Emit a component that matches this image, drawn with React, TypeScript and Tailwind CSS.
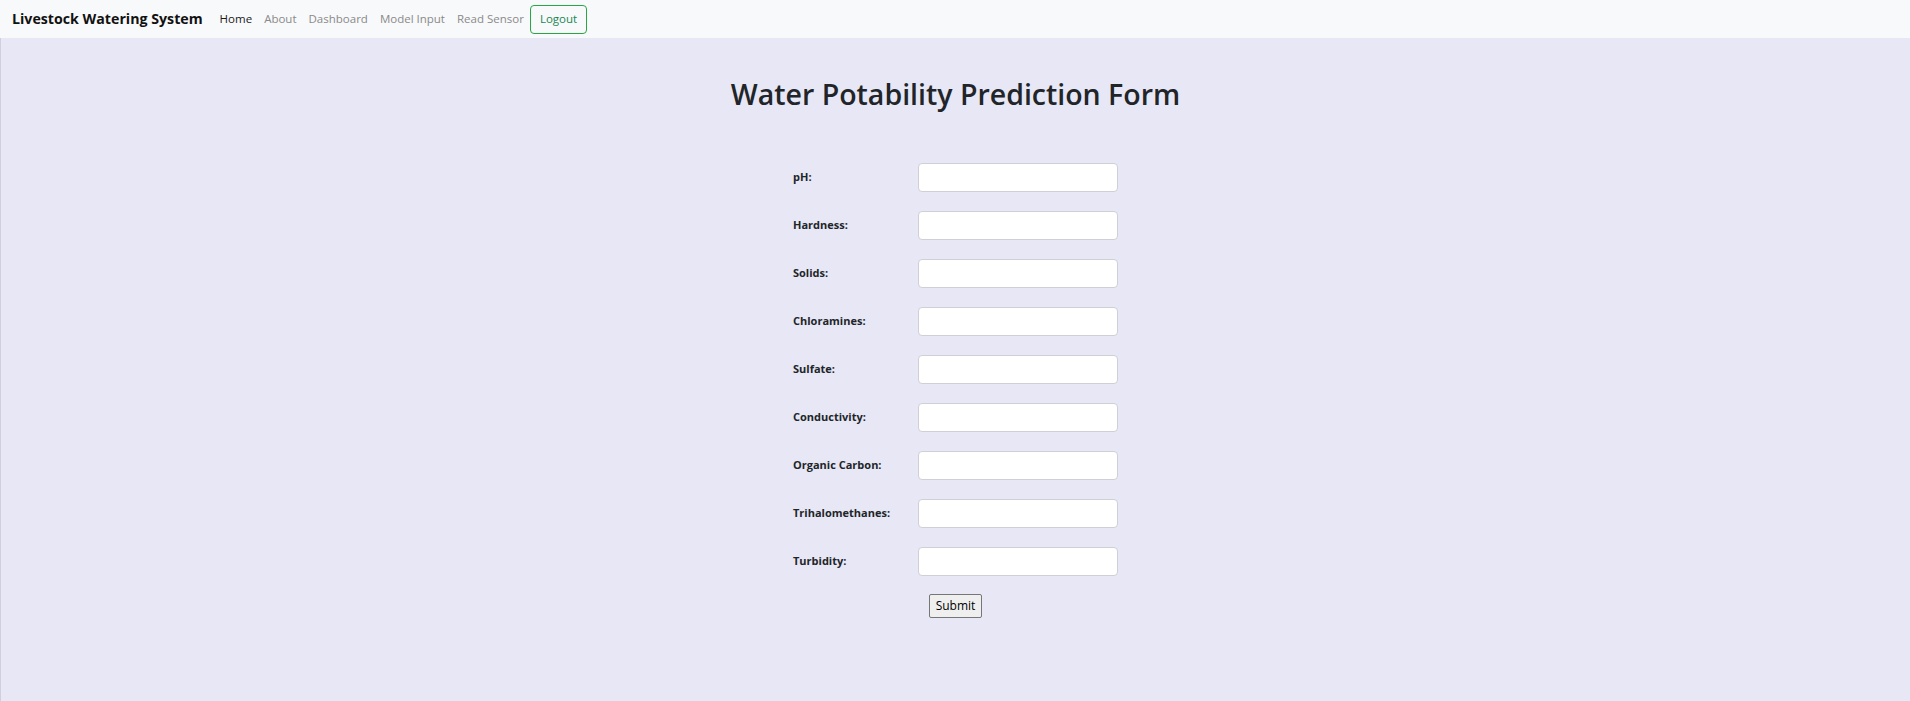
import React from 'react';

const fields = [
    'pH',
    'Hardness',
    'Solids',
    'Chloramines',
    'Sulfate',
    'Conductivity',
    'Organic Carbon',
    'Trihalomethanes',
    'Turbidity',
];

const links = ['Home', 'About', 'Dashboard', 'Model Input', 'Read Sensor'];

export default function App() {
    return (
        <div className="min-h-[701px] flex flex-col bg-[#e7e7f5] font-['Open_Sans',_'Noto_Sans',_sans-serif]">
            {/* Navbar */}
            <nav className="h-[38px] bg-[#f8f9fa] flex items-center pl-[12px]">
                <span className="text-[14.2px] font-bold text-[#111] mr-[11px]">
                    Livestock Watering System
                </span>
                <div className="flex items-center">
                    {links.map((l, i) => (
                        <a
                            key={l}
                            href="#"
                            className={
                                'px-[6px] text-[11.5px] ' +
                                (i === 0 ? 'text-[#1a1a1a]' : 'text-[#8a8a8a]')
                            }
                        >
                            {l}
                        </a>
                    ))}
                    <button className="ml-0 h-[29px] px-[9px] text-[11.5px] text-[#198754] border border-[#28a745] rounded-[4px]">
                        Logout
                    </button>
                </div>
            </nav>

            {/* Main */}
            <main className="flex-1 border-l border-[#cfcfe0] flex flex-col items-center">
                <h1 className="mt-[39px] text-[28.5px] font-semibold text-[#212529] leading-[1.2]">
                    Water Potability Prediction Form
                </h1>

                <form className="mt-[52px] flex flex-col items-center" onSubmit={(e) => e.preventDefault()}>
                    <div className="grid grid-cols-[125px_200px] gap-y-[19px] items-center">
                        {fields.map((f) => (
                            <React.Fragment key={f}>
                                <label className="text-[11px] font-bold text-[#212529]">{f}:</label>
                                <input
                                    type="text"
                                    className="h-[29px] w-[200px] bg-white border border-[#cfcfd6] rounded-[4px] px-2 text-[13px] outline-none"
                                />
                            </React.Fragment>
                        ))}
                    </div>
                    <button
                        type="submit"
                        className="mt-[18px] h-[24px] px-[6px] bg-[#efefef] border border-[#767676] rounded-[2px] text-[12px] text-black"
                    >
                        Submit
                    </button>
                </form>
            </main>
        </div>
    );
}
